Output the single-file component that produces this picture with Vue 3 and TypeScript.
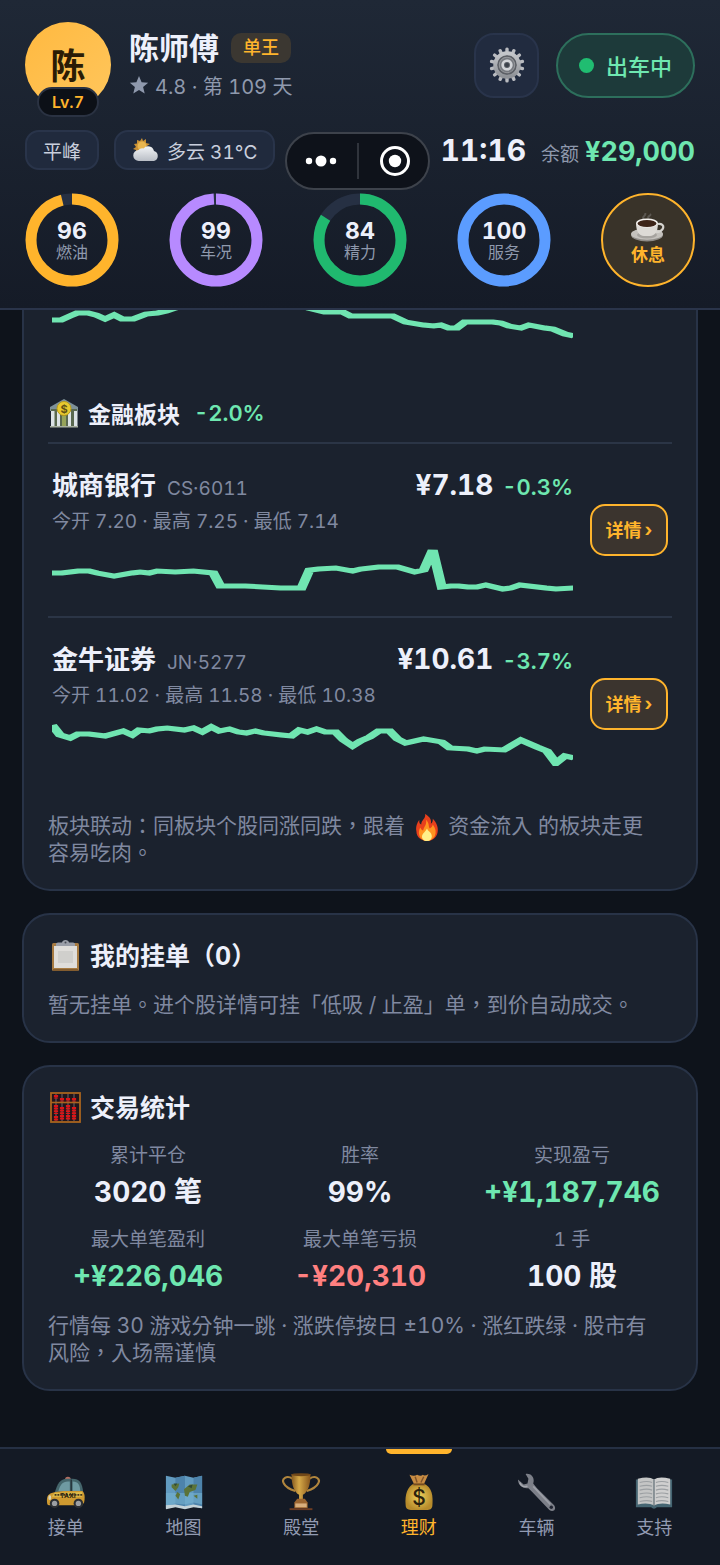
<script setup lang="ts">
interface Ring {
  value: number
  label: string
  color: string
}

interface Stock {
  name: string
  code: string
  price: string
  change: string
  open: string
  high: string
  low: string
  points: string
}

interface Stat {
  label: string
  value: string
  tone: 'plain' | 'up' | 'down'
}

interface Tab {
  id: string
  label: string
}

const RADIUS = 41
const CIRCUMFERENCE = 2 * Math.PI * RADIUS

const rings: Ring[] = [
  { value: 96, label: '燃油', color: '#ffb42c' },
  { value: 99, label: '车况', color: '#b78aff' },
  { value: 84, label: '精力', color: '#20b96f' },
  { value: 100, label: '服务', color: '#5b9cff' },
]

const dash = (value: number): string => `${(CIRCUMFERENCE * value) / 100} ${CIRCUMFERENCE}`

// The chart space is half as wide as it is drawn, so steep moves get a heavier stroke.
const halve = (points: string): string =>
  points
    .split(' ')
    .map((pair) => {
      const [x, y] = pair.split(',').map(Number)
      return `${x / 2},${y}`
    })
    .join(' ')

const previousPoints = halve(
  '0,10 9,10 18,6 25,3 36,3 44,5 53,9 62,5 70,9 81,9 94,4 105,3 114,1 123,-2 160,-12 220,-14 256,-2 272,2 290,2 298,6 340,6 353,12 371,15 381,16 388,15 396,18 404,18 412,12 440,12 448,13 456,16 468,18 476,15 492,18 500,19 512,24 521,26',
)

const stocks: Stock[] = [
  {
    name: '城商银行',
    code: 'CS·6011',
    price: '¥7.18',
    change: '-0.3%',
    open: '7.20',
    high: '7.25',
    low: '7.14',
    points: halve(
      '0,25 10,25 26,23 37,23 45,25 62,28 80,25 88,24 97,25 105,23 123,24 141,23 161,25 168,38 193,38 228,40 249,40 257,22 266,21 283,20 300,23 308,21 326,19 345,19 362,24 371,22 380,2 389,39 398,38 406,38 415,39 424,39 433,37 450,41 458,40 467,37 493,40 503,41 521,40',
    ),
  },
  {
    name: '金牛证券',
    code: 'JN·5277',
    price: '¥10.61',
    change: '-3.7%',
    open: '11.02',
    high: '11.58',
    low: '10.38',
    points: halve(
      '0,3 8,13 18,16 26,12 37,12 53,14 71,9 80,13 87,8 97,9 105,7 115,6 132,8 141,6 150,10 159,5 167,9 177,7 186,10 194,11 203,9 211,11 229,13 239,14 247,8 255,10 264,7 273,10 283,10 291,18 300,24 308,19 317,15 326,9 337,9 345,17 353,21 371,17 389,20 397,26 415,27 424,29 432,27 451,28 468,18 484,25 494,29 503,41 512,34 521,36',
    ),
  },
]

const stats: Stat[] = [
  { label: '累计平仓', value: '3020 笔', tone: 'plain' },
  { label: '胜率', value: '99%', tone: 'plain' },
  { label: '实现盈亏', value: '+¥1,187,746', tone: 'up' },
  { label: '最大单笔盈利', value: '+¥226,046', tone: 'up' },
  { label: '最大单笔亏损', value: '-¥20,310', tone: 'down' },
  { label: '1 手', value: '100 股', tone: 'plain' },
]

const tabs: Tab[] = [
  { id: 'taxi', label: '接单' },
  { id: 'map', label: '地图' },
  { id: 'trophy', label: '殿堂' },
  { id: 'money', label: '理财' },
  { id: 'wrench', label: '车辆' },
  { id: 'book', label: '支持' },
]
const activeTab = 'money'

const gearTeeth = Array.from({ length: 14 }, (_, i) => (i * 360) / 14)
const abacusRods = [8, 14, 20, 26]
</script>

<template>
  <div class="app">
    <header class="top">
      <div class="profile">
        <div class="avatar">
          陈
          <span class="level">Lv.7</span>
        </div>
        <div class="who">
          <div class="name-row">
            <h1>陈师傅</h1>
            <span class="rank">单王</span>
          </div>
          <div class="rating">
            <svg width="20" height="20" viewBox="0 0 20 20" aria-hidden="true">
              <path d="M10 1l2.6 6.2 6.6.5-5.1 4.3 1.6 6.5L10 15l-5.7 3.5 1.6-6.5L.8 7.7l6.600-.5z" fill="#8f99ad" />
            </svg>
            <span>4.8 · 第 109 天</span>
          </div>
        </div>
        <button class="gear" type="button" aria-label="设置">
          <svg width="36" height="36" viewBox="0 0 36 36" aria-hidden="true">
            <defs>
              <linearGradient id="steel" x1="0" y1="0" x2="0" y2="1">
                <stop offset="0" stop-color="#c4c6ca" />
                <stop offset="1" stop-color="#8f9297" />
              </linearGradient>
            </defs>
            <g fill="#b9bbc0">
              <rect v-for="a in gearTeeth" :key="a" x="16.300" y="0.500" width="3.400" height="7" rx="1.500" :transform="`rotate(${a} 18 18)`" />
            </g>
            <circle cx="18" cy="18" r="11.500" fill="none" stroke="url(#steel)" stroke-width="4.500" />
            <circle cx="18" cy="18" r="9" fill="#96989c" stroke="#5d6066" stroke-width="1.500" />
            <circle cx="18" cy="18" r="6.500" fill="none" stroke="#777a80" stroke-width="1.500" />
            <circle cx="18" cy="18" r="4.300" fill="#575b63" stroke="#d2d4d8" stroke-width="2.600" />
            <circle cx="18" cy="18" r="2" fill="#3c414b" />
          </svg>
        </button>
        <button class="status" type="button"><i></i>出车中</button>
      </div>

      <div class="info">
        <span class="chip">平峰</span>
        <span class="chip">
          <svg width="28" height="28" viewBox="0 0 28 28" aria-hidden="true">
            <defs>
              <linearGradient id="cloud" x1="0" y1="0" x2="0" y2="1">
                <stop offset="0" stop-color="#f2f4f6" />
                <stop offset="1" stop-color="#b9bec6" />
              </linearGradient>
            </defs>
            <path d="M10 2l1 3 3-2v4l4 1-3 2-10 8-1-4-3-1 3-2-2-3 3-.5L5 4l3 1z" fill="#c99035" />
            <circle cx="10" cy="10" r="4.500" fill="#eab64e" />
            <path d="M7 25a5.500 5.500 0 0 1-.5-11 5 5 0 0 1 5-1.500A6 6 0 0 1 22 15a5.200 5.200 0 0 1 0 10z" fill="url(#cloud)" />
          </svg>
          多云 31°C
        </span>
        <div class="wallet">
          <time>11:16</time>
          <span class="wallet-label">余额</span>
          <strong>¥29,000</strong>
        </div>
      </div>

      <div class="rings">
        <div v-for="ring in rings" :key="ring.label" class="ring">
          <svg width="94" height="94" viewBox="0 0 94 94" aria-hidden="true">
            <circle cx="47" cy="47" :r="RADIUS" fill="none" stroke="#263043" stroke-width="11" />
            <circle
              cx="47" cy="47" :r="RADIUS" fill="none" :stroke="ring.color" stroke-width="11"
              :stroke-dasharray="dash(ring.value)" transform="rotate(-90 47 47)"
            />
          </svg>
          <div class="ring-text">
            <b>{{ ring.value }}</b>
            <span>{{ ring.label }}</span>
          </div>
        </div>
        <button class="rest" type="button">
          <svg width="36" height="30" viewBox="0 0 36 30" aria-hidden="true">
            <path d="M14 6c-3-3 3-3 1-6M19 6c-3-3 3-3 1-5" fill="none" stroke="#5b5751" stroke-width="2" />
            <ellipse cx="17" cy="22" rx="16" ry="6.500" fill="#8f8c88" />
            <ellipse cx="17" cy="21" rx="16" ry="5.800" fill="#c4c1bd" />
            <ellipse cx="17" cy="22" rx="10" ry="3.500" fill="#a6a39f" />
            <path d="M28 11c8-1 7 8-3 8" fill="none" stroke="#d6d4d0" stroke-width="2.200" />
            <path d="M6 10c0 8 3 13 8 13h6c5 0 8-5 8-13z" fill="#dddad6" />
            <ellipse cx="17" cy="10" rx="11" ry="4.500" fill="#f2f0ed" />
            <ellipse cx="17" cy="10.500" rx="9.500" ry="3.500" fill="#3d2418" />
          </svg>
          休息
        </button>
      </div>

      <div class="capsule">
        <button type="button" aria-label="更多">
          <svg width="32" height="12" viewBox="0 0 32 12" fill="#fff" aria-hidden="true">
            <circle cx="4" cy="6" r="3.200" /><circle cx="16" cy="6" r="5.500" /><circle cx="28" cy="6" r="3.200" />
          </svg>
        </button>
        <i></i>
        <button type="button" aria-label="关闭">
          <svg width="32" height="32" viewBox="0 0 32 32" aria-hidden="true">
            <circle cx="16" cy="16" r="13.500" fill="none" stroke="#fff" stroke-width="3" />
            <circle cx="16" cy="16" r="6.200" fill="#fff" />
          </svg>
        </button>
      </div>
    </header>

    <main>
      <section class="card market">
        <div class="stock-tail">
          <svg class="spark" viewBox="0 0 260 44" preserveAspectRatio="none" aria-hidden="true">
            <polyline :points="previousPoints" />
          </svg>
        </div>

        <div class="sector">
          <svg width="32" height="30" viewBox="0 0 32 30" aria-hidden="true">
            <path d="M2 9L16 1l14 8v4H2z" fill="#7e9198" />
            <rect x="3" y="11" width="26" height="17" fill="#59684f" />
            <g fill="#dce3e6">
              <rect x="3" y="13" width="3.500" height="15" /><rect x="9" y="13" width="3" height="15" />
              <rect x="20" y="13" width="3" height="15" /><rect x="26" y="13" width="3.500" height="15" />
            </g>
            <path d="M14 18h4v10h-4z" fill="#96a45a" />
            <path d="M2 28h28v1.500H2z" fill="#a8b0a0" />
            <circle cx="16" cy="10.500" r="7" fill="#e7c92f" stroke="#b59a1d" />
            <text x="16" y="14.500" text-anchor="middle" font-size="11" font-weight="700" fill="#5f5015">$</text>
          </svg>
          <h2>金融板块</h2>
          <span class="change">-2.0%</span>
        </div>

        <article v-for="stock in stocks" :key="stock.code" class="stock">
          <div class="stock-info">
            <div class="stock-head">
              <h3>{{ stock.name }}</h3>
              <span class="code">{{ stock.code }}</span>
              <strong>{{ stock.price }}</strong>
              <span class="change">{{ stock.change }}</span>
            </div>
            <p>今开 {{ stock.open }} · 最高 {{ stock.high }} · 最低 {{ stock.low }}</p>
            <svg class="spark" viewBox="0 0 260 44" preserveAspectRatio="none" aria-hidden="true">
              <polyline :points="stock.points" />
            </svg>
          </div>
          <button class="detail" type="button">详情<span>›</span></button>
        </article>

        <p class="note">
          板块联动：同板块个股同涨同跌，跟着
          <svg class="fire" width="24" height="27" viewBox="0 0 24 28" aria-hidden="true">
            <path d="M10 0c5 3 7 6 6 10 2-1 2-3 2-5 4 4 6 9 5 14-1 6-6 9-11 9S1 25 1 18C0 13 2 9 4 6c0 3 0 4 2 5 0-5 5-6 4-11z" fill="#e8401c" />
            <path d="M11 6c4 4 2 7 4 9 2-1 3-3 3-4 3 4 4 8 2 12-2 3-5 5-8 5s-7-2-8-6c-1-3 0-6 1-8 1 2 2 3 3 3 1-4 4-6 3-11z" fill="#ff9420" />
            <path d="M12 15c1 3 5 4 5 8 0 3-2 5-5 5s-6-2-5-6c1-3 4-4 5-7z" fill="#fff08a" />
          </svg>
          资金流入 的板块走更容易吃肉。
        </p>
      </section>

      <section class="card">
        <div class="title">
          <svg width="34" height="34" viewBox="0 0 34 34" aria-hidden="true">
            <rect x="4" y="4" width="27" height="28" rx="1.500" fill="#a77b42" />
            <path d="M6 7h23v22H6z" fill="#dfddda" />
            <path d="M10 12h15v12H10z" fill="#d0cfcc" />
            <path d="M5 31h25" stroke="#76522a" stroke-width="1.500" />
            <path d="M8 7V5q0-1.500 2-1.500h4q.5-2.500 3.500-2.500t3.500 2.500h4q2 0 2 1.500v2z" fill="#9a9ea8" />
            <circle cx="17.500" cy="3.500" r="1" fill="#454a55" />
          </svg>
          <h2>我的挂单（0）</h2>
        </div>
        <p class="note">暂无挂单。进个股详情可挂「低吸 / 止盈」单，到价自动成交。</p>
      </section>

      <section class="card">
        <div class="title">
          <svg width="34" height="34" viewBox="0 0 34 34" aria-hidden="true">
            <rect x="3" y="2" width="29" height="29" fill="#21151b" stroke="#a9641e" stroke-width="1.800" />
            <g v-for="(x, i) in abacusRods" :key="x">
              <path :d="`M${x} 3v27`" stroke="#75666a" />
              <path
                :d="`M${x} ${i === 0 ? 4 : 7}v3.500M${x} ${i % 2 ? 16 : 14}v9M${x} ${i === 0 ? 25 : 24}v5`"
                stroke="#dd1417" stroke-width="4.200" stroke-dasharray="1.900 .7"
              />
            </g>
            <path d="M3 11.500h29" stroke="#a9641e" stroke-width="1.600" />
          </svg>
          <h2>交易统计</h2>
        </div>
        <dl class="stats">
          <div v-for="stat in stats" :key="stat.label">
            <dt>{{ stat.label }}</dt>
            <dd :class="stat.tone">{{ stat.value }}</dd>
          </div>
        </dl>
        <p class="note">行情每 30 游戏分钟一跳 · 涨跌停按日 ±10% · 涨红跌绿 · 股市有风险，入场需谨慎</p>
      </section>
    </main>

    <nav>
      <a v-for="tab in tabs" :key="tab.id" href="#" :class="{ active: tab.id === activeTab }">
        <svg v-if="tab.id === 'taxi'" width="40" height="40" viewBox="0 0 42 42" aria-hidden="true">
          <path d="M20 8q0-3 3-3t3 3z" fill="#b36f62" />
          <path d="M9 22C12 12 15 7 22 7h6c7 0 10 4 11 14v5H9z" fill="#45666c" />
          <path d="M13 20c2-6 4-10 10-10h2v11zM28 10c6 0 8 4 8 11h-8z" fill="#6f9aa2" />
          <path d="M26.500 8v13" stroke="#26343b" stroke-width="1.500" />
          <path d="M1 29c0-5 3-7 9-8l8-1h20c3 2 3 7 2 12l-2 3H3c-2 0-2-3-2-6z" fill="#cf9a30" />
          <path d="M9 22l29-1v5H6z" fill="#e0bd4a" />
          <path d="M9 24h30" stroke="#41351d" stroke-width="2" stroke-dasharray="2 1" />
          <text x="23" y="27" text-anchor="middle" font-size="7" font-weight="700" fill="#30270e">TAXI</text>
          <circle cx="9" cy="33" r="5" fill="#2d3034" /><circle cx="9" cy="33" r="2.800" fill="#9c9fa3" />
          <circle cx="34" cy="33" r="5" fill="#2d3034" /><circle cx="34" cy="33" r="2.800" fill="#9c9fa3" />
          <ellipse cx="4" cy="27" rx="1.500" ry="2.500" fill="#d8d4b8" />
        </svg>
        <svg v-else-if="tab.id === 'map'" width="40" height="40" viewBox="0 0 42 42" aria-hidden="true">
          <path d="M2 4l10 2 10-2 9 2 9-2v34l-9-2-9 2-10-2-10 2z" fill="#629bc0" />
          <path d="M12 6l10-2v34l-10-2zM31 6l9-2v34l-9-2z" fill="#4d83ab" />
          <path d="M2 22h38v12l-9-2-10 2-10-1-9 3z" fill="#77b2d1" opacity=".6" />
          <path d="M8 13l8-1-1 4-3 4-4-4zM14 21l3 2-2 6-3-4zM21 18l6-5h8l-2 6-6 2-2 5-3-1zM31 25l4-1v4z" fill="#5b7338" />
          <path d="M10 12h4l-2 3zM25 15l5-2-1 4z" fill="#304a35" />
          <path d="M2 35l10-1 10 2 9-2 9 2v2l-9-1-9 2-10-2-10 2z" fill="#c4d2d8" />
        </svg>
        <svg v-else-if="tab.id === 'trophy'" width="40" height="40" viewBox="0 0 42 42" aria-hidden="true">
          <defs>
            <linearGradient id="gold"><stop offset="0" stop-color="#85591f" /><stop offset=".4" stop-color="#d6a948" /><stop offset="1" stop-color="#87551c" /></linearGradient>
          </defs>
          <path d="M12 7C6 3 0 7 3 12c2 4 6 6 12 8M30 7c6-4 12 0 9 5-2 4-6 6-12 8" fill="none" stroke="#b0853d" stroke-width="2.200" />
          <path d="M11 2h20c0 12-3 19-8 22v6h-4v-6C14 21 11 14 11 2z" fill="url(#gold)" />
          <ellipse cx="21" cy="2.800" rx="10" ry="1.600" fill="#714819" />
          <path d="M17 28h8l3 4v6H14v-6z" fill="#9b6530" /><path d="M15 33h12v4H15z" fill="#d8ae7d" />
          <path d="M9 38h24v2H9z" fill="#6d3c22" />
        </svg>
        <svg v-else-if="tab.id === 'money'" width="40" height="40" viewBox="0 0 42 42" aria-hidden="true">
          <defs>
            <radialGradient id="bag"><stop offset="0" stop-color="#f0d25e" /><stop offset="1" stop-color="#b78b2b" /></radialGradient>
          </defs>
          <path d="M16 13L11 3q5 2 8 0 4 2 6 0 2 2 6-1l-5 11z" fill="#c88c43" />
          <path d="M19 11L17 5M23 11l3-6" stroke="#805429" stroke-width="1.500" />
          <path d="M16 12h10c9 4 10 13 9 24-1 4-4 4-7 4H14c-4 0-7-1-7-5C6 23 9 15 16 12z" fill="url(#bag)" />
          <path d="M15 13h12" stroke="#744b22" stroke-width="2" />
          <text x="21" y="35" text-anchor="middle" font-size="22" font-weight="500" fill="#2a210d">$</text>
        </svg>
        <svg v-else-if="tab.id === 'wrench'" width="40" height="40" viewBox="0 0 42 42" aria-hidden="true">
          <path d="M9 2c6-1 10 4 8 10l4 5 18 18c3 4-1 8-5 5L16 21l-4-4C6 18 1 14 1 8l6 5 4-1 1-5z" fill="#7c7f88" />
          <path d="M17 15l18 19" stroke="#9b9ea6" stroke-width="1.800" />
          <path d="M3 11c1 4 4 5 8 4" fill="none" stroke="#a5a8af" stroke-width="1.500" />
          <circle cx="36" cy="37" r="1.800" fill="#202532" />
        </svg>
        <svg v-else width="40" height="40" viewBox="0 0 42 42" aria-hidden="true">
          <path d="M2 8h38v29H24q-3 3-6 0H2z" fill="#456572" />
          <path d="M4 7q12-3 17 1v27q-6-3-17-1z" fill="#c4c5c5" /><path d="M38 7q-12-3-17 1v27q6-3 17-1z" fill="#cfcfcf" />
          <path d="M6 11q8-2 13 0M6 15q8-2 13 0M6 19q8-2 13 0M6 23q8-2 13 0M6 27q8-2 13 0M6 31q8-2 13 0M23 11q6-2 13 0M23 15q6-2 13 0M23 19q6-2 13 0M23 23q6-2 13 0M23 27q6-2 13 0M23 31q6-2 13 0" fill="none" stroke="#9b9fa2" stroke-width="1.200" />
          <path d="M21 8v28" stroke="#717d83" stroke-width="1.500" />
        </svg>
        <span>{{ tab.label }}</span>
      </a>
    </nav>
  </div>
</template>

<style>
body {
  margin: 0;
  background: #0e131b;
}
</style>

<style scoped>
* {
  box-sizing: border-box;
}

.app {
  display: flex;
  flex-direction: column;
  min-height: 100vh;
  background: #0e131b;
  color: #edf0fb;
  font-family: Inter, "Noto Sans CJK SC", sans-serif;
  font-size: 18px;
  font-variant-numeric: tabular-nums;
}

h1, h2, h3, p, dl, dd {
  margin: 0;
}

button {
  padding: 0;
  border: 0;
  background: none;
  color: inherit;
  font: inherit;
}

svg {
  display: block;
  flex: none;
}

.top {
  position: relative;
  padding: 22px 25px 21px;
  border-bottom: 2px solid #2a344a;
  background: linear-gradient(#1f2836, #151b27);
}

.profile {
  display: flex;
  align-items: center;
}

.avatar {
  position: relative;
  display: flex;
  align-items: center;
  justify-content: center;
  width: 86px;
  height: 86px;
  padding-bottom: 4px;
  border-radius: 50%;
  background: linear-gradient(135deg, #ffb940, #ffc65c);
  color: #2b1c05;
  font-size: 35px;
  font-weight: 700;
}

.level {
  position: absolute;
  top: 65px;
  left: 12px;
  width: 62px;
  height: 30px;
  border: 2px solid #2a3242;
  border-radius: 15px;
  background: #0c1017;
  color: #ffb42c;
  font-size: 16px;
  font-weight: 600;
  line-height: 26px;
  text-align: center;
}

.who {
  margin-left: 18px;
  white-space: nowrap;
}

.name-row {
  display: flex;
  align-items: center;
  gap: 12px;
  height: 40px;
}

h1 {
  font-size: 30px;
  line-height: 40px;
}

.rank {
  padding: 0 12px;
  border-radius: 10px;
  background: #3b3731;
  color: #ffb42c;
  font-size: 18px;
  font-weight: 500;
  line-height: 30px;
}

.rating {
  display: flex;
  align-items: center;
  gap: 6px;
  height: 34px;
  color: #8f99ad;
  font-size: 20px;
}

.gear {
  display: flex;
  align-items: center;
  justify-content: center;
  width: 65px;
  height: 65px;
  margin-left: auto;
  border: 2px solid #29344b;
  border-radius: 20px;
  background: #212b3f;
}

.status {
  display: flex;
  align-items: center;
  justify-content: center;
  gap: 12px;
  width: 139px;
  height: 65px;
  margin-left: 17px;
  border: 2px solid #2d6f5c;
  border-radius: 33px;
  background: #1d3a3a;
  color: #6ee7b0;
  font-size: 22px;
  font-weight: 500;
}

.status i {
  width: 15px;
  height: 15px;
  border-radius: 50%;
  background: #20bd71;
}

.info {
  display: flex;
  align-items: center;
  gap: 15px;
  margin-top: 22px;
  white-space: nowrap;
}

.chip {
  display: flex;
  align-items: center;
  gap: 7px;
  height: 40px;
  padding: 0 16px;
  border: 2px solid #29344a;
  border-radius: 14px;
  background: #202a3d;
  color: #c9cfdd;
  font-size: 19px;
}

.wallet {
  display: flex;
  align-items: baseline;
  margin-left: auto;
}

.wallet time {
  font-size: 30px;
  font-weight: 700;
  line-height: 36px;
}

.wallet-label {
  margin: 0 6px 0 15px;
  color: #8f99ad;
  font-size: 19px;
}

.wallet strong {
  color: #6ee7b0;
  font-size: 27px;
}

.rings {
  display: flex;
  justify-content: space-between;
  margin-top: 23px;
}

.ring {
  display: grid;
  place-items: center;
}

.ring > * {
  grid-area: 1 / 1;
}

.ring-text {
  display: flex;
  flex-direction: column;
  align-items: center;
}

.ring-text b {
  font-size: 23px;
  line-height: 24px;
}

.ring-text span {
  color: #8f99ad;
  font-size: 16px;
  line-height: 18px;
}

.rest {
  display: flex;
  flex-direction: column;
  align-items: center;
  justify-content: center;
  width: 94px;
  height: 94px;
  border: 2px solid #ffb42c;
  border-radius: 50%;
  background: #393329;
  color: #ffb42c;
  font-size: 17px;
  font-weight: 700;
  line-height: 24px;
}

.capsule {
  position: absolute;
  top: 132px;
  left: 285px;
  display: flex;
  align-items: center;
  justify-content: center;
  gap: 20px;
  width: 145px;
  height: 58px;
  border: 2px solid #3d424b;
  border-radius: 29px;
  background: #0e121a;
}

.capsule i {
  width: 2px;
  height: 36px;
  background: #30343c;
}

main {
  display: flex;
  flex: 1;
  flex-direction: column;
  gap: 22px;
  padding: 0 22px 56px;
}

.card {
  padding: 23px 24px;
  border: 2px solid #283347;
  border-radius: 28px;
  background: #1b222e;
}

.market {
  padding-top: 0;
  border-top: 0;
  border-radius: 0 0 28px 28px;
}

.stock-tail {
  padding: 0 99px 0 4px;
}

.spark {
  width: 100%;
  height: 44px;
  overflow: hidden;
}

.spark polyline {
  fill: none;
  stroke: #70e5b1;
  stroke-width: 5;
}

.sector {
  display: flex;
  align-items: center;
  height: 61px;
  margin-top: 29px;
  border-bottom: 2px solid #2b3546;
}

.sector h2 {
  margin: 0 14px 0 8px;
  font-size: 23px;
}

.change {
  color: #6ee7b0;
  font-size: 22px;
  font-weight: 600;
}

.stock {
  display: flex;
  align-items: center;
  gap: 17px;
  padding: 24px 4px;
}

.stock + .stock {
  border-top: 2px solid #2b3546;
}

.stock-info {
  flex: 1;
  min-width: 0;
}

.stock-head {
  display: flex;
  align-items: baseline;
  height: 34px;
  line-height: 34px;
}

h3 {
  font-size: 26px;
}

.code {
  margin-left: 11px;
  color: #8089a0;
  font-size: 19px;
}

.stock-head strong {
  margin: 0 9px 0 auto;
  font-size: 28px;
}

.stock-info p {
  margin: 6px 0 12px;
  color: #8089a0;
  font-size: 19px;
  line-height: 28px;
}

.detail {
  display: flex;
  align-items: center;
  justify-content: center;
  gap: 3px;
  width: 78px;
  height: 52px;
  padding-bottom: 2px;
  border: 2px solid #ffb42c;
  border-radius: 15px;
  background: #3b342e;
  color: #ffb42c;
  font-size: 18px;
  font-weight: 700;
}

.note {
  padding-right: 16px;
  color: #8089a0;
  font-family: Inter, "Noto Sans CJK TC", sans-serif;
  font-size: 21px;
  line-height: 27px;
}

.market .note {
  margin-top: 22px;
}

.fire {
  display: inline-block;
  margin: -4px 4px;
  vertical-align: middle;
}

.title {
  display: flex;
  align-items: center;
  gap: 8px;
  height: 36px;
}

.title h2 {
  font-size: 25px;
  line-height: 36px;
}

.title + .note {
  margin-top: 17px;
}

.stats {
  display: grid;
  grid-template-columns: repeat(3, 1fr);
  gap: 12px;
  margin: 16px 0 14px;
  text-align: center;
  white-space: nowrap;
}

dt {
  color: #8089a0;
  font-size: 19px;
  line-height: 28px;
}

dd {
  font-size: 28px;
  font-weight: 700;
  line-height: 44px;
}

.up {
  color: #6ee7b0;
}

.down {
  color: #ff8080;
}

nav {
  display: flex;
  height: 118px;
  padding: 0 7px;
  border-top: 2px solid #253044;
  background: #141a25;
}

nav a {
  position: relative;
  display: flex;
  flex: 1;
  flex-direction: column;
  align-items: center;
  padding-top: 23px;
  color: #929bb2;
  font-size: 18px;
  line-height: 32px;
  text-decoration: none;
}

nav a.active {
  color: #ffb42c;
}

nav a.active::before {
  position: absolute;
  top: 0;
  width: 66px;
  height: 5px;
  border-radius: 0 0 6px 6px;
  background: #ffb42c;
  content: "";
}
</style>
